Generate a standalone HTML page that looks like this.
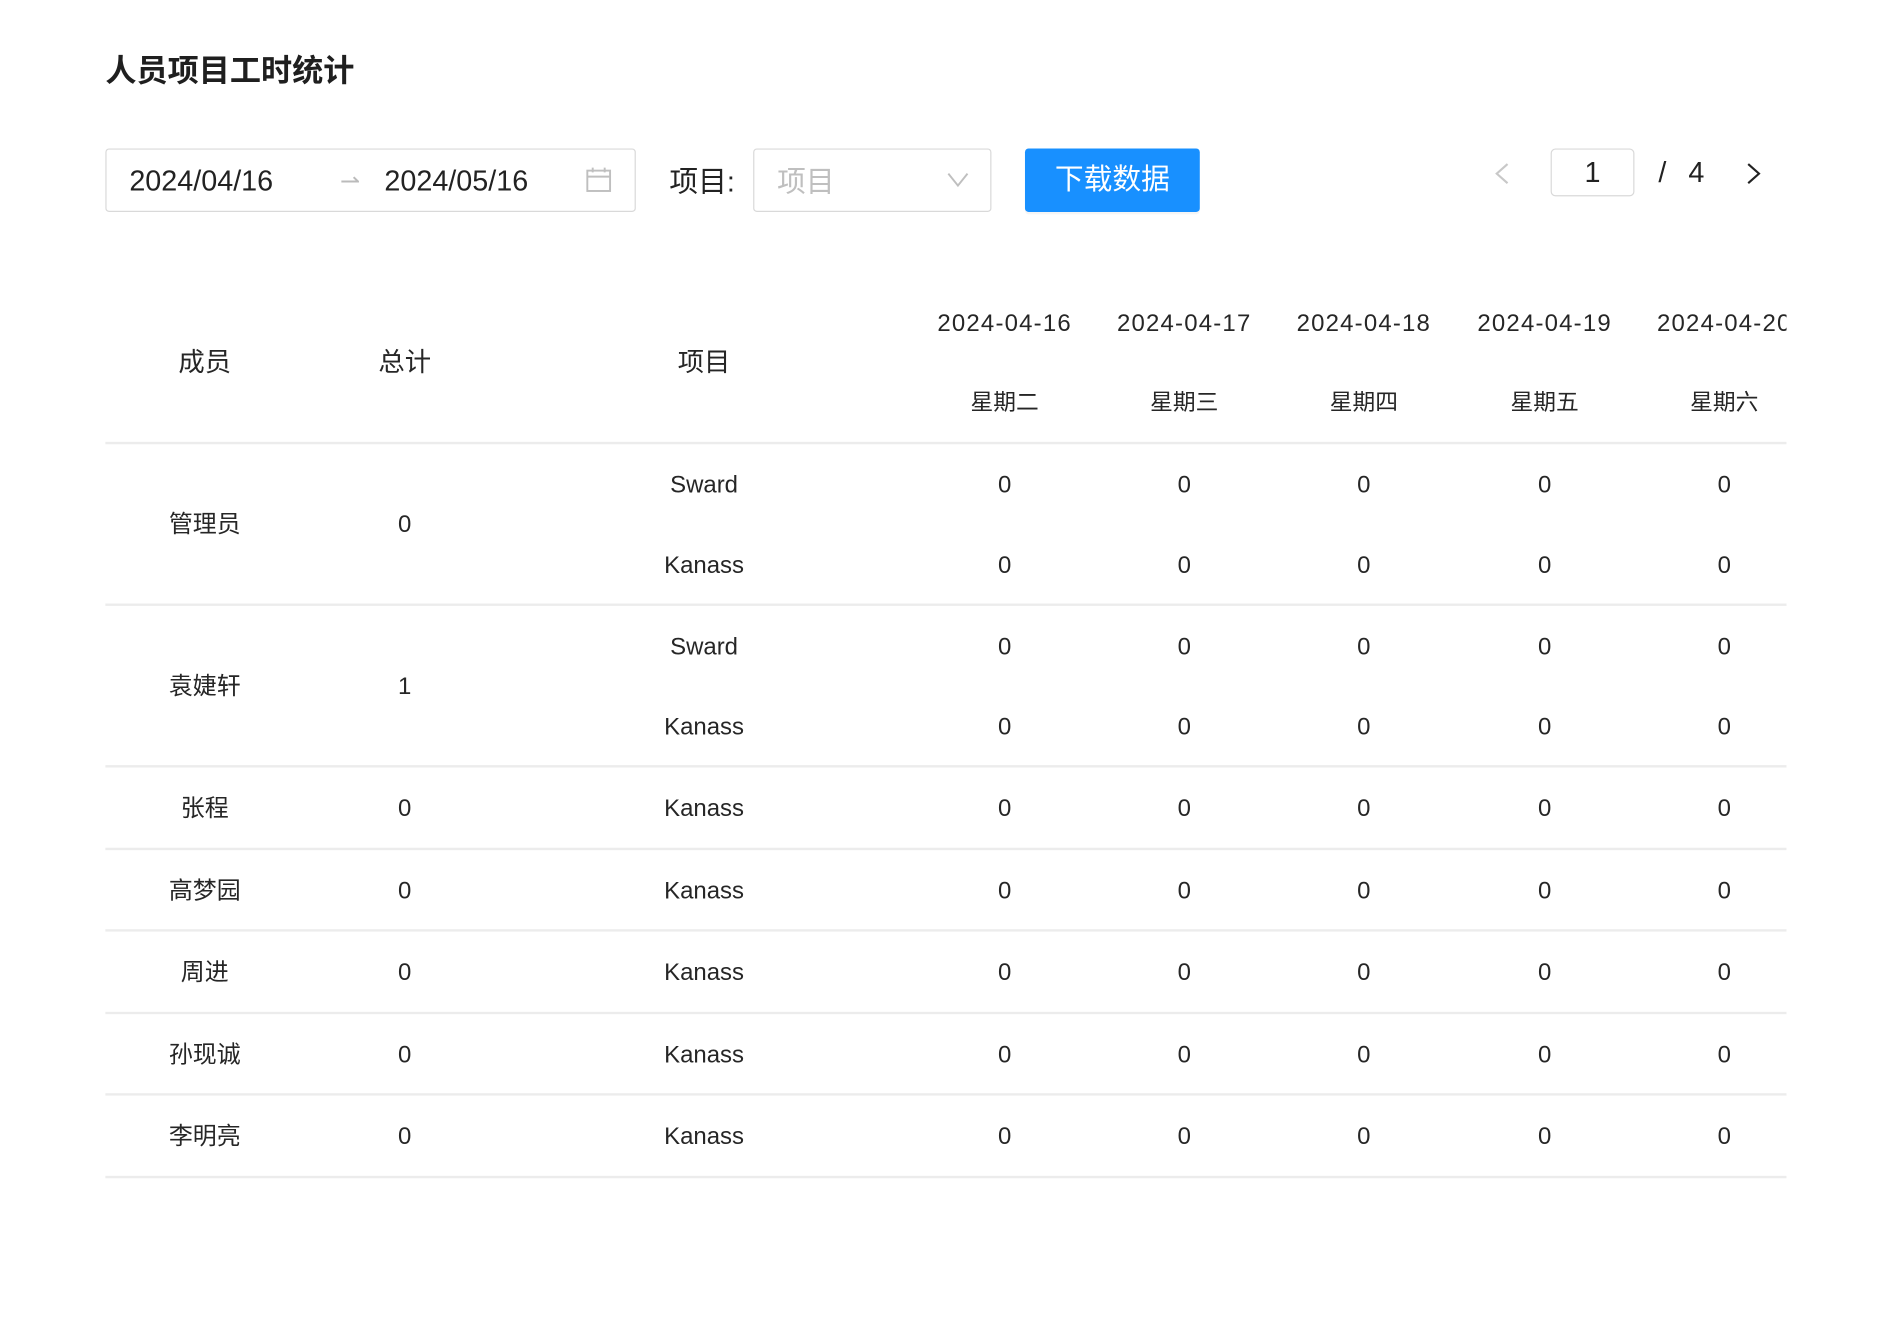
<!DOCTYPE html>
<html><head><meta charset="utf-8"><style>
html,body{margin:0;padding:0;background:#fff;width:1878px;height:1340px;overflow:hidden}
#s{position:absolute;left:0;top:0;width:1570px;height:1120px;transform:scale(1.1974);transform-origin:0 0;font-family:"Liberation Sans","Noto Sans CJK SC",sans-serif;color:#262626}
.a{position:absolute;white-space:nowrap}
.c{position:absolute;transform:translate(-50%,calc(-50% + 2px));white-space:nowrap;font-size:20px;color:#262626}
.k{transform:translate(-50%,calc(-50% - 1px))}
.box{position:absolute;border:1.5px solid #d9d9d9;border-radius:3px;box-sizing:border-box;background:#fff}
.ln{position:absolute;left:88px;width:1404px;height:1.5px;background:#ececec}
.d{font-size:20px;letter-spacing:1px}
.w{font-size:19px}
</style></head><body><div id="s">
<div class="a" style="left:88px;top:39px;font-size:26px;font-weight:bold;color:#1f1f1f">人员项目工时统计</div>

<div class="box" style="left:88px;top:124px;width:443px;height:53px"></div>
<div class="a" style="left:108px;top:138px;font-size:24px;color:#222">2024/04/16</div>
<div class="a" style="left:284px;top:139px;font-size:20px;color:#bbb">⇀</div>
<div class="a" style="left:321px;top:138px;font-size:24px;color:#222">2024/05/16</div>
<svg class="a" style="left:489px;top:139px" width="22" height="22" viewBox="0 0 22 22" fill="none" stroke="#bfbfbf" stroke-width="1.6"><rect x="1.5" y="3.5" width="19" height="17"/><line x1="1.5" y1="8.5" x2="20.5" y2="8.5"/><line x1="6" y1="1" x2="6" y2="5"/><line x1="16" y1="1" x2="16" y2="5"/></svg>

<div class="a" style="left:559px;top:132px;font-size:24px;color:#222">项目:</div>
<div class="box" style="left:629px;top:124px;width:199px;height:53px"></div>
<div class="a" style="left:649px;top:132px;font-size:24px;color:#bfbfbf">项目</div>
<svg class="a" style="left:791px;top:143px" width="18" height="14" viewBox="0 0 18 14" fill="none" stroke="#bfbfbf" stroke-width="1.6"><polyline points="1,2 9,12 17,2"/></svg>

<div class="a" style="left:856px;top:124px;width:146px;height:53px;background:#1890ff;border-radius:3px;box-shadow:0 2px 0 rgba(0,0,0,.04);color:#fff;font-size:24px;line-height:53px;text-align:center">下载数据</div>

<svg class="a" style="left:1247px;top:135px" width="14" height="20" viewBox="0 0 14 20" fill="none" stroke="#c8c8c8" stroke-width="1.8"><polyline points="12,2 3,10 12,18"/></svg>
<div class="box" style="left:1295px;top:124px;width:70px;height:40px;border-radius:4px"></div>
<div class="a" style="left:1295px;top:125px;width:70px;line-height:40px;text-align:center;font-size:24px;color:#222">1</div>
<div class="a" style="left:1385px;top:131px;font-size:24px;color:#222">/</div>
<div class="a" style="left:1410px;top:131px;font-size:24px;color:#222">4</div>
<svg class="a" style="left:1458px;top:135px" width="14" height="20" viewBox="0 0 14 20" fill="none" stroke="#222" stroke-width="1.8"><polyline points="2,2 11,10 2,18"/></svg>

<div style="position:absolute;left:88px;top:0;width:1404px;height:1113px;overflow:hidden">
<div style="position:absolute;left:-88px;top:0;width:1700px;height:1113px">
<div class="c k" style="left:171px;top:302px;font-size:22px">成员</div>
<div class="c k" style="left:338px;top:302px;font-size:22px">总计</div>
<div class="c k" style="left:588px;top:302px;font-size:22px">项目</div>
<div class="c d" style="left:839px;top:269px">2024-04-16</div>
<div class="c d" style="left:989px;top:269px">2024-04-17</div>
<div class="c d" style="left:1139px;top:269px">2024-04-18</div>
<div class="c d" style="left:1290px;top:269px">2024-04-19</div>
<div class="c d" style="left:1440px;top:269px">2024-04-20</div>
<div class="c w k" style="left:839px;top:336px">星期二</div>
<div class="c w k" style="left:989px;top:336px">星期三</div>
<div class="c w k" style="left:1139px;top:336px">星期四</div>
<div class="c w k" style="left:1290px;top:336px">星期五</div>
<div class="c w k" style="left:1440px;top:336px">星期六</div>
</div></div>
<div class="ln" style="top:369px"></div>
<div class="ln" style="top:504px"></div>
<div class="ln" style="top:639px"></div>
<div class="ln" style="top:708px"></div>
<div class="ln" style="top:776px"></div>
<div class="ln" style="top:845px"></div>
<div class="ln" style="top:913px"></div>
<div class="ln" style="top:982px"></div>

<div class="c k" style="left:171px;top:437px">管理员</div><div class="c" style="left:338px;top:437px">0</div>
<div class="c k" style="left:171px;top:572px">袁婕轩</div><div class="c" style="left:338px;top:572px">1</div>
<div class="c k" style="left:171px;top:674px">张程</div><div class="c" style="left:338px;top:674px">0</div>
<div class="c k" style="left:171px;top:743px">高梦园</div><div class="c" style="left:338px;top:743px">0</div>
<div class="c k" style="left:171px;top:811px">周进</div><div class="c" style="left:338px;top:811px">0</div>
<div class="c k" style="left:171px;top:880px">孙现诚</div><div class="c" style="left:338px;top:880px">0</div>
<div class="c k" style="left:171px;top:948px">李明亮</div><div class="c" style="left:338px;top:948px">0</div>

<div class="c" style="left:588px;top:404px">Sward</div>
<div class="c" style="left:588px;top:471px">Kanass</div>
<div class="c" style="left:588px;top:539px">Sward</div>
<div class="c" style="left:588px;top:606px">Kanass</div>
<div class="c" style="left:588px;top:674px">Kanass</div>
<div class="c" style="left:588px;top:743px">Kanass</div>
<div class="c" style="left:588px;top:811px">Kanass</div>
<div class="c" style="left:588px;top:880px">Kanass</div>
<div class="c" style="left:588px;top:948px">Kanass</div>

<div class="c" style="left:839px;top:404px">0</div><div class="c" style="left:989px;top:404px">0</div><div class="c" style="left:1139px;top:404px">0</div><div class="c" style="left:1290px;top:404px">0</div><div class="c" style="left:1440px;top:404px">0</div>
<div class="c" style="left:839px;top:471px">0</div><div class="c" style="left:989px;top:471px">0</div><div class="c" style="left:1139px;top:471px">0</div><div class="c" style="left:1290px;top:471px">0</div><div class="c" style="left:1440px;top:471px">0</div>
<div class="c" style="left:839px;top:539px">0</div><div class="c" style="left:989px;top:539px">0</div><div class="c" style="left:1139px;top:539px">0</div><div class="c" style="left:1290px;top:539px">0</div><div class="c" style="left:1440px;top:539px">0</div>
<div class="c" style="left:839px;top:606px">0</div><div class="c" style="left:989px;top:606px">0</div><div class="c" style="left:1139px;top:606px">0</div><div class="c" style="left:1290px;top:606px">0</div><div class="c" style="left:1440px;top:606px">0</div>
<div class="c" style="left:839px;top:674px">0</div><div class="c" style="left:989px;top:674px">0</div><div class="c" style="left:1139px;top:674px">0</div><div class="c" style="left:1290px;top:674px">0</div><div class="c" style="left:1440px;top:674px">0</div>
<div class="c" style="left:839px;top:743px">0</div><div class="c" style="left:989px;top:743px">0</div><div class="c" style="left:1139px;top:743px">0</div><div class="c" style="left:1290px;top:743px">0</div><div class="c" style="left:1440px;top:743px">0</div>
<div class="c" style="left:839px;top:811px">0</div><div class="c" style="left:989px;top:811px">0</div><div class="c" style="left:1139px;top:811px">0</div><div class="c" style="left:1290px;top:811px">0</div><div class="c" style="left:1440px;top:811px">0</div>
<div class="c" style="left:839px;top:880px">0</div><div class="c" style="left:989px;top:880px">0</div><div class="c" style="left:1139px;top:880px">0</div><div class="c" style="left:1290px;top:880px">0</div><div class="c" style="left:1440px;top:880px">0</div>
<div class="c" style="left:839px;top:948px">0</div><div class="c" style="left:989px;top:948px">0</div><div class="c" style="left:1139px;top:948px">0</div><div class="c" style="left:1290px;top:948px">0</div><div class="c" style="left:1440px;top:948px">0</div>
</div></body></html>
